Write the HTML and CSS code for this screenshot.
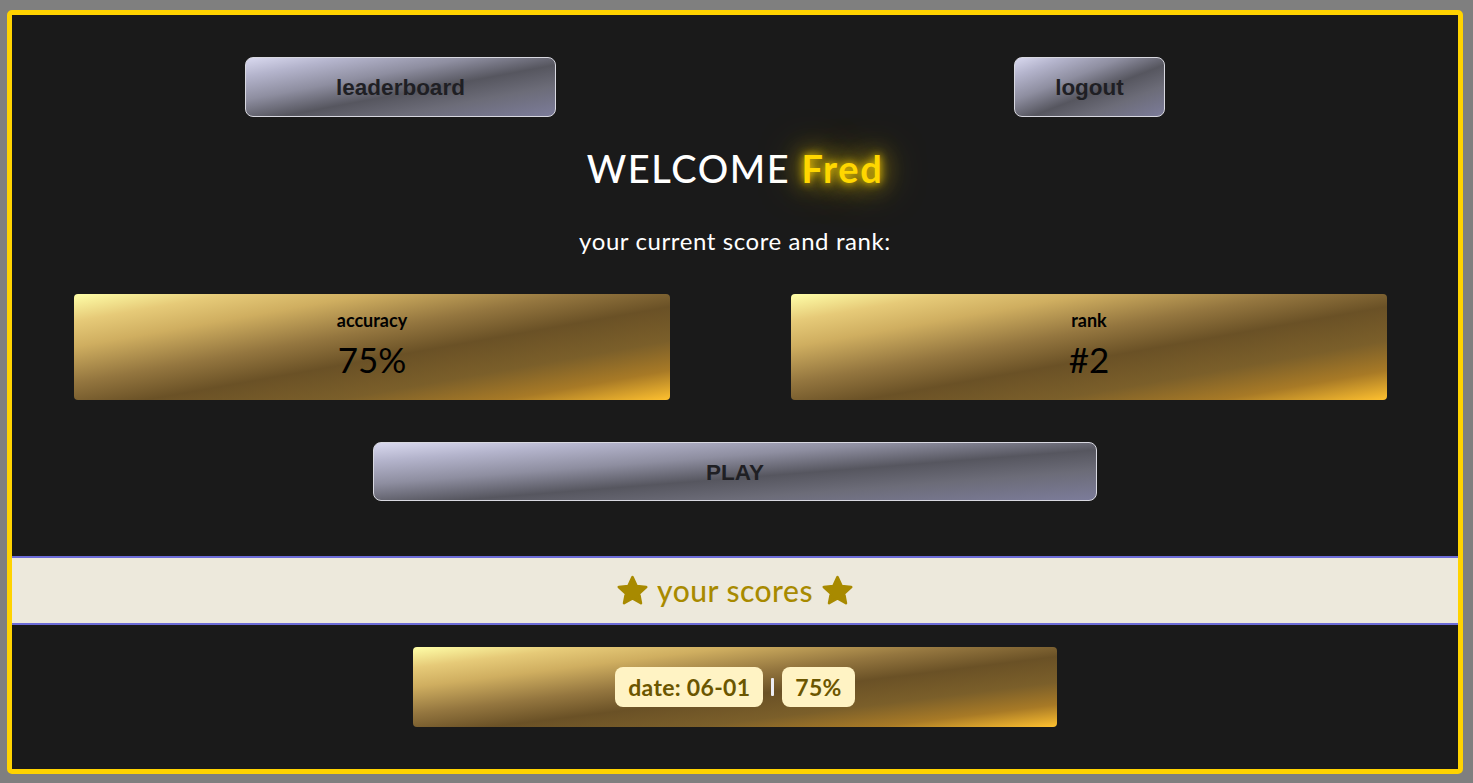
FILE: index.html
```html
<!DOCTYPE html>
<html lang="en">
<head>
<meta charset="utf-8">
<title>Dashboard</title>
<link rel="stylesheet" href="styles.css">
</head>
<body>
<div class="frame">
  <nav class="nav">
    <button class="btn btn-leader">leaderboard</button>
    <button class="btn btn-logout">logout</button>
  </nav>
  <h1 class="welcome">WELCOME <span class="name">Fred</span></h1>
  <p class="subtitle">your current score and rank:</p>
  <div class="cards">
    <div class="card">
      <div class="card-label">accuracy</div>
      <div class="card-value">75%</div>
    </div>
    <div class="card">
      <div class="card-label">rank</div>
      <div class="card-value">#2</div>
    </div>
  </div>
  <div class="play-wrap">
    <button class="btn btn-play">PLAY</button>
  </div>
  <div class="scores-bar">
    <svg class="star" viewBox="0 0 32 32"><polygon points="16,3 20,11.6 29.3,12.6 22.4,19 24.2,28.3 16,23.6 7.8,28.3 9.6,19 2.7,12.6 12,11.6"/></svg>
    <span class="scores-title">your scores</span>
    <svg class="star" viewBox="0 0 32 32"><polygon points="16,3 20,11.6 29.3,12.6 22.4,19 24.2,28.3 16,23.6 7.8,28.3 9.6,19 2.7,12.6 12,11.6"/></svg>
  </div>
  <div class="score-list">
    <div class="score-row">
      <span class="pill">date: 06-01</span>
      <span class="sep"></span>
      <span class="pill">75%</span>
    </div>
  </div>
</div>
</body>
</html>
```

FILE: styles.css
```css
html, body {
  height: 100%;
}
body {
  margin: 10px 10px 9px 7px;
  background: #7f7f7f;
  font-family: Lato, "Noto Sans", sans-serif;
  overflow: hidden;
}
.frame {
  box-sizing: border-box;
  height: 764px;
  border: 5px solid #ffd300;
  border-radius: 5px;
  background: #1a1a1a;
}
.nav {
  display: flex;
  justify-content: space-between;
  padding: 42px 293px 0 233px;
}
.btn {
  font-family: "Liberation Sans", Arial, sans-serif;
  font-weight: 700;
  font-size: 22.5px;
  color: #1f1f24;
  border: 1px solid #d8d8e0;
  border-radius: 8px;
  height: 60px;
  padding: 2px 0 0;
  background: linear-gradient(to bottom right, #d9d9ef 0%, #b4b4cc 16%, #8e8ea0 36%, #56565f 56%, #6c6c78 74%, #7c7c9a 100%);
  cursor: pointer;
}
.btn-leader {
  width: 311px;
}
.btn-logout {
  width: 151px;
}
.welcome {
  margin: 26px 0 0;
  text-align: center;
  font-size: 38px;
  line-height: 50px;
  font-weight: 500;
  color: #ffffff;
  letter-spacing: 1.6px;
}
.name {
  color: #ffd700;
  font-weight: bold;
  text-shadow: 0 0 8px #ffd700, 0 0 22px rgba(255, 215, 0, 0.9), 0 0 44px rgba(255, 215, 0, 0.7);
}
.subtitle {
  margin: 32px 0 0;
  text-align: center;
  color: #ffffff;
  font-size: 24px;
  line-height: 32px;
  letter-spacing: 0.6px;
}
.card, .score-row {
  background: linear-gradient(to bottom right, #ffffa8 0%, #e6ca78 13%, #cfae60 25%, #94763f 42%, #6a5126 56%, #7b5f2a 72%, #a87a26 86%, #ffc12f 100%);
  border-radius: 4px;
}
.cards {
  display: flex;
  gap: 121px;
  padding: 0 71px 0 62px;
  margin-top: 37px;
}
.card {
  flex: 1;
  height: 106px;
  box-sizing: border-box;
  padding-top: 14px;
  text-align: center;
  color: #000;
}
.card-label {
  font-size: 18px;
  font-weight: bold;
  line-height: 24px;
}
.card-value {
  font-size: 35px;
  line-height: 42px;
  margin-top: 6px;
}
.play-wrap {
  display: flex;
  justify-content: center;
  margin-top: 42px;
}
.btn-play {
  width: 724px;
  height: 59px;
  font-size: 22.5px;
}
.scores-bar {
  margin-top: 55px;
  height: 65px;
  border-top: 2px solid #6c6cd8;
  border-bottom: 2px solid #6c6cd8;
  background: #ede9dc;
  display: flex;
  align-items: center;
  justify-content: center;
  gap: 8px;
}
.scores-title {
  font-size: 30px;
  font-weight: 500;
  color: #a88a00;
  padding-bottom: 2px;
  letter-spacing: 0.5px;
}
.star {
  width: 33px;
  height: 33px;
  fill: #a88a00;
  stroke: #a88a00;
  stroke-width: 2.5;
  stroke-linejoin: round;
}
.score-list {
  display: flex;
  justify-content: center;
  margin-top: 22px;
}
.score-row {
  width: 644px;
  height: 80px;
  display: flex;
  align-items: center;
  justify-content: center;
  gap: 8px;
}
.pill {
  background: #fff3c4;
  color: #6b5600;
  font-weight: bold;
  font-size: 23px;
  line-height: 40px;
  height: 40px;
  padding: 0 13px;
  border-radius: 8px;
  letter-spacing: 0.3px;
}
.sep {
  width: 3px;
  height: 18px;
  background: #ececf4;
  border-radius: 1px;
}
```
